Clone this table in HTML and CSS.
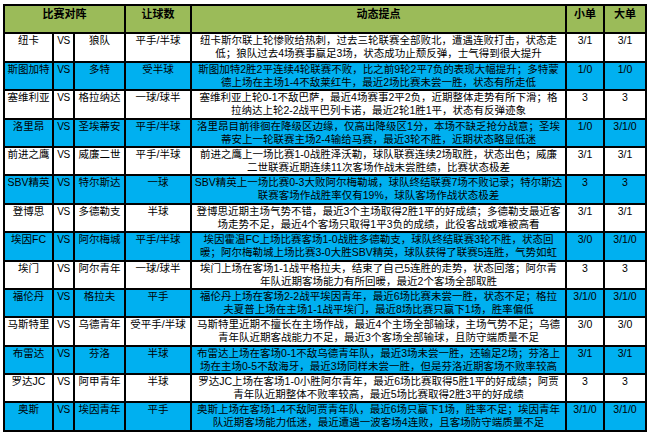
FILE: index.html
```html
<!DOCTYPE html>
<html lang="zh">
<head>
<meta charset="utf-8">
<title>比赛对阵</title>
<link rel="stylesheet" href="styles.css">
</head>
<body>
<table class="grid">
<colgroup>
<col class="c-home"><col class="c-vs"><col class="c-away"><col class="c-hc"><col class="c-note"><col class="c-small"><col class="c-big">
</colgroup>
<thead>
<tr class="head">
<th colspan="3">比赛对阵</th><th>让球数</th><th>动态提点</th><th>小单</th><th>大单</th>
</tr>
</thead>
<tbody>
<tr class="w"><td>纽卡</td><td class="vs">VS</td><td>狼队</td><td>平手/半球</td><td class="note">纽卡斯尔联上轮惨败给热刺，过去三轮联赛全部败北，遭遇连败打击，状态走<br>低；狼队过去4场赛事赢足3场，状态成功止颓反弹，士气得到很大提升</td><td>3/1</td><td>3/1</td></tr>
<tr class="b"><td>斯图加特</td><td class="vs">VS</td><td>多特</td><td>受半球</td><td class="note">斯图加特2胜2平连续4轮联赛不败，比之前9轮2平7负的表现大幅提升；多特蒙<br>德上场在主场1-4不敌莱红牛，最近2场比赛未尝一胜，状态有所走低</td><td>1/0</td><td>1/0</td></tr>
<tr class="w"><td>塞维利亚</td><td class="vs">VS</td><td>格拉纳达</td><td>一球/球半</td><td class="note">塞维利亚上轮0-1不敌巴萨，最近4场赛事2平2负，近期整体走势有所下滑；格<br>拉纳达上轮2-2战平巴列卡诺，最近2轮1胜1平，状态有反弹迹象</td><td>3</td><td>3</td></tr>
<tr class="b"><td>洛里昂</td><td class="vs">VS</td><td>圣埃蒂安</td><td>平手/半球</td><td class="note">洛里昂目前徘徊在降级区边缘，仅高出降级区1分，本场不缺乏抢分战意；圣埃<br>蒂安上一轮联赛主场2-4输给马赛，最近3轮不胜，近期状态略显低迷</td><td>1/0</td><td>3/1/0</td></tr>
<tr class="w"><td>前进之鹰</td><td class="vs">VS</td><td>威廉二世</td><td>平手/半球</td><td class="note">前进之鹰上一场比赛1-0战胜泽沃勒，球队联赛连续2场取胜，状态出色；威廉<br>二世联赛近期连续11次客场作战未尝胜绩，比赛状态极差</td><td>3/1</td><td>3/1</td></tr>
<tr class="b"><td>SBV精英</td><td class="vs">VS</td><td>特尔斯达</td><td>一球</td><td class="note">SBV精英上一场比赛0-3大败阿尔梅勒城，球队终结联赛7场不败记录；特尔斯达<br>联赛客场作战胜率仅有19%，球队客场作战状态极差</td><td>3</td><td>3</td></tr>
<tr class="w"><td>登博思</td><td class="vs">VS</td><td>多德勒支</td><td>半球</td><td class="note">登博思近期主场气势不错，最近3个主场取得2胜1平的好成绩；多德勒支最近客<br>场走势不足，最近4个客场只取得1平3负的成绩，此役客战或难被高看</td><td>3/1</td><td>3/1</td></tr>
<tr class="b"><td>埃因FC</td><td class="vs">VS</td><td>阿尔梅城</td><td>平手/半球</td><td class="note">埃因霍温FC上场比赛客场1-0战胜多德勒支，球队终结联赛3轮不胜，状态回<br>暖；阿尔梅勒城上场比赛3-0大胜SBV精英，球队获得了联赛5连胜，气势如虹</td><td>3/0</td><td>3/1/0</td></tr>
<tr class="w"><td>埃门</td><td class="vs">VS</td><td>阿尔青年</td><td>一球/球半</td><td class="note">埃门上场在客场1-1战平格拉夫，结束了自己5连胜的走势，状态回落；阿尔青<br>年队近期客场能力有所回暖，最近2个客场全部取胜</td><td>3</td><td>3</td></tr>
<tr class="b"><td>福伦丹</td><td class="vs">VS</td><td>格拉夫</td><td>平手</td><td class="note">福伦丹上场在客场2-2战平埃因青年，最近6场比赛未尝一胜，状态不足；格拉<br>夫夏普上场在主场1-1战平埃门，最近8场比赛只赢下1场，胜率偏低</td><td>3/1/0</td><td>3/1/0</td></tr>
<tr class="w"><td>马斯特里</td><td class="vs">VS</td><td>乌德青年</td><td>受平手/半球</td><td class="note">马斯特里近期不擅长在主场作战，最近4个主场全部输球，主场气势不足；乌德<br>青年队近期客战能力不足，最近3个客场全部输球，且防守端质量不足</td><td>3/0</td><td>3/0</td></tr>
<tr class="b"><td>布雷达</td><td class="vs">VS</td><td>芬洛</td><td>半球</td><td class="note">布雷达上场在客场0-1不敌乌德青年队，最近3场未尝一胜，还输足2场；芬洛上<br>场在主场0-5不敌海牙，最近3场同样未尝一胜，但是芬洛近期客场不败率较高</td><td>3/1</td><td>3/1</td></tr>
<tr class="w"><td>罗达JC</td><td class="vs">VS</td><td>阿甲青年</td><td>半球</td><td class="note">罗达JC上场在客场1-0小胜阿尔青年，最近6场比赛取得5胜1平的好成绩；阿贾<br>青年队近期整体不败率较高，最近5场比赛取得2胜3平的好成绩</td><td>3</td><td>3</td></tr>
<tr class="b"><td>奥斯</td><td class="vs">VS</td><td>埃因青年</td><td>平手</td><td class="note">奥斯上场在客场1-4不敌阿贾青年队，最近6场只赢下1场，胜率不足；埃因青年<br>队近期客场能力低迷，最近遭遇一波客场4连败，且客场防守端质量不足</td><td>3/1/0</td><td>3/1/0</td></tr>
</tbody>
</table>
</body>
</html>
```
FILE: styles.css
```css
html, body {
  margin: 0;
  padding: 0;
  background: #ffffff;
}
body {
  padding: 4px 0 0 3px;
  font-family: "Liberation Sans", "Noto Sans CJK SC", sans-serif;
  font-size: 10.5px;
  color: #000;
}
.grid {
  border-collapse: collapse;
  table-layout: fixed;
  width: 642px;
}
.c-home { width: 49px; }
.c-vs { width: 21px; }
.c-away { width: 51px; }
.c-hc { width: 66px; }
.c-note { width: 375px; }
.c-small { width: 38px; }
.c-big { width: 42px; }

.grid th,
.grid td {
  border: 2px solid #000;
  padding: 0;
  text-align: center;
  vertical-align: top;
  line-height: 13px;
  white-space: nowrap;
  overflow: hidden;
}
.grid tr {
  height: 28.4px;
}
.head th {
  background: #9bbb59;
  font-size: 11px;
  font-weight: bold;
  padding-top: 2px;
}
.grid tr.b td {
  background: #00b0f0;
}
.grid tr.w td {
  background: #ffffff;
}
.vs {
  font-size: 10px;
  letter-spacing: -0.5px;
}
```
